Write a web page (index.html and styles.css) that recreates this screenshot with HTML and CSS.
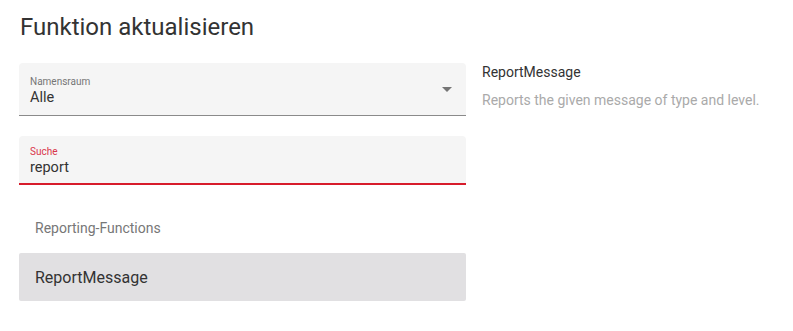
FILE: index.html
```html
<!DOCTYPE html>
<html lang="de">
<head>
<meta charset="utf-8">
<link rel="stylesheet" href="styles.css">
</head>
<body>
<div class="page">
  <h1 class="title">Funktion aktualisieren</h1>
  <div class="content">
    <div class="left">
      <div class="field select">
        <div class="field-inner">
          <div class="label">Namensraum</div>
          <div class="value">Alle</div>
        </div>
        <svg class="arrow" width="10" height="5" viewBox="0 0 10 5"><path d="M0 0 L10 0 L5 5 Z" fill="#757575"/></svg>
      </div>
      <div class="field search">
        <div class="field-inner">
          <div class="label red">Suche</div>
          <div class="value">report</div>
        </div>
      </div>
      <div class="group">Reporting-Functions</div>
      <div class="item">ReportMessage</div>
    </div>
    <div class="right">
      <div class="name">ReportMessage</div>
      <div class="desc">Reports the given message of type and level.</div>
    </div>
  </div>
</div>
</body>
</html>
```
FILE: styles.css
```css
html, body {
  margin: 0;
  padding: 0;
  background: #fff;
}
body {
  font-family: Roboto, "Noto Sans", sans-serif;
  color: #333;
}
.page {
  padding: 11px 19px 0 19px;
}
.title {
  margin: 0 0 0 1px;
  font-size: 24px;
  font-weight: 400;
  line-height: 32px;
  color: #333;
}
.content {
  display: flex;
  margin-top: 20px;
}
.left {
  width: 447px;
  display: flex;
  flex-direction: column;
}
.field {
  background: #f5f5f5;
  border-radius: 4px 4px 0 0;
  display: flex;
  align-items: center;
}
.field-inner {
  flex: 1;
  padding: 0 11px;
}
.select {
  height: 52px;
  border-bottom: 1px solid #8a8a8a;
}
.select .field-inner {
  padding-top: 4px;
}
.search {
  margin-top: 20px;
  height: 47px;
  border-bottom: 2px solid #d71c2b;
}
.search .field-inner {
  padding-top: 4px;
}
.label {
  font-size: 10px;
  line-height: 13px;
  color: #757575;
}
.label.red {
  color: #d9354a;
}
.value {
  font-size: 14.5px;
  line-height: 20px;
  color: #333;
}
.arrow {
  margin-right: 14px;
  margin-top: 0;
}
.group {
  margin-top: 33px;
  padding-left: 16px;
  font-size: 14px;
  line-height: 20px;
  color: #777;
}
.item {
  margin-top: 15px;
  height: 48px;
  background: #e1e0e2;
  border-radius: 2px;
  display: flex;
  align-items: center;
  padding-left: 16px;
  font-size: 16px;
  color: #333;
}
.right {
  padding-left: 16px;
  padding-top: 1px;
}
.name {
  font-size: 14px;
  line-height: 16px;
  color: #333;
}
.desc {
  margin-top: 12px;
  font-size: 14px;
  line-height: 16px;
  color: #aaa;
}
```
